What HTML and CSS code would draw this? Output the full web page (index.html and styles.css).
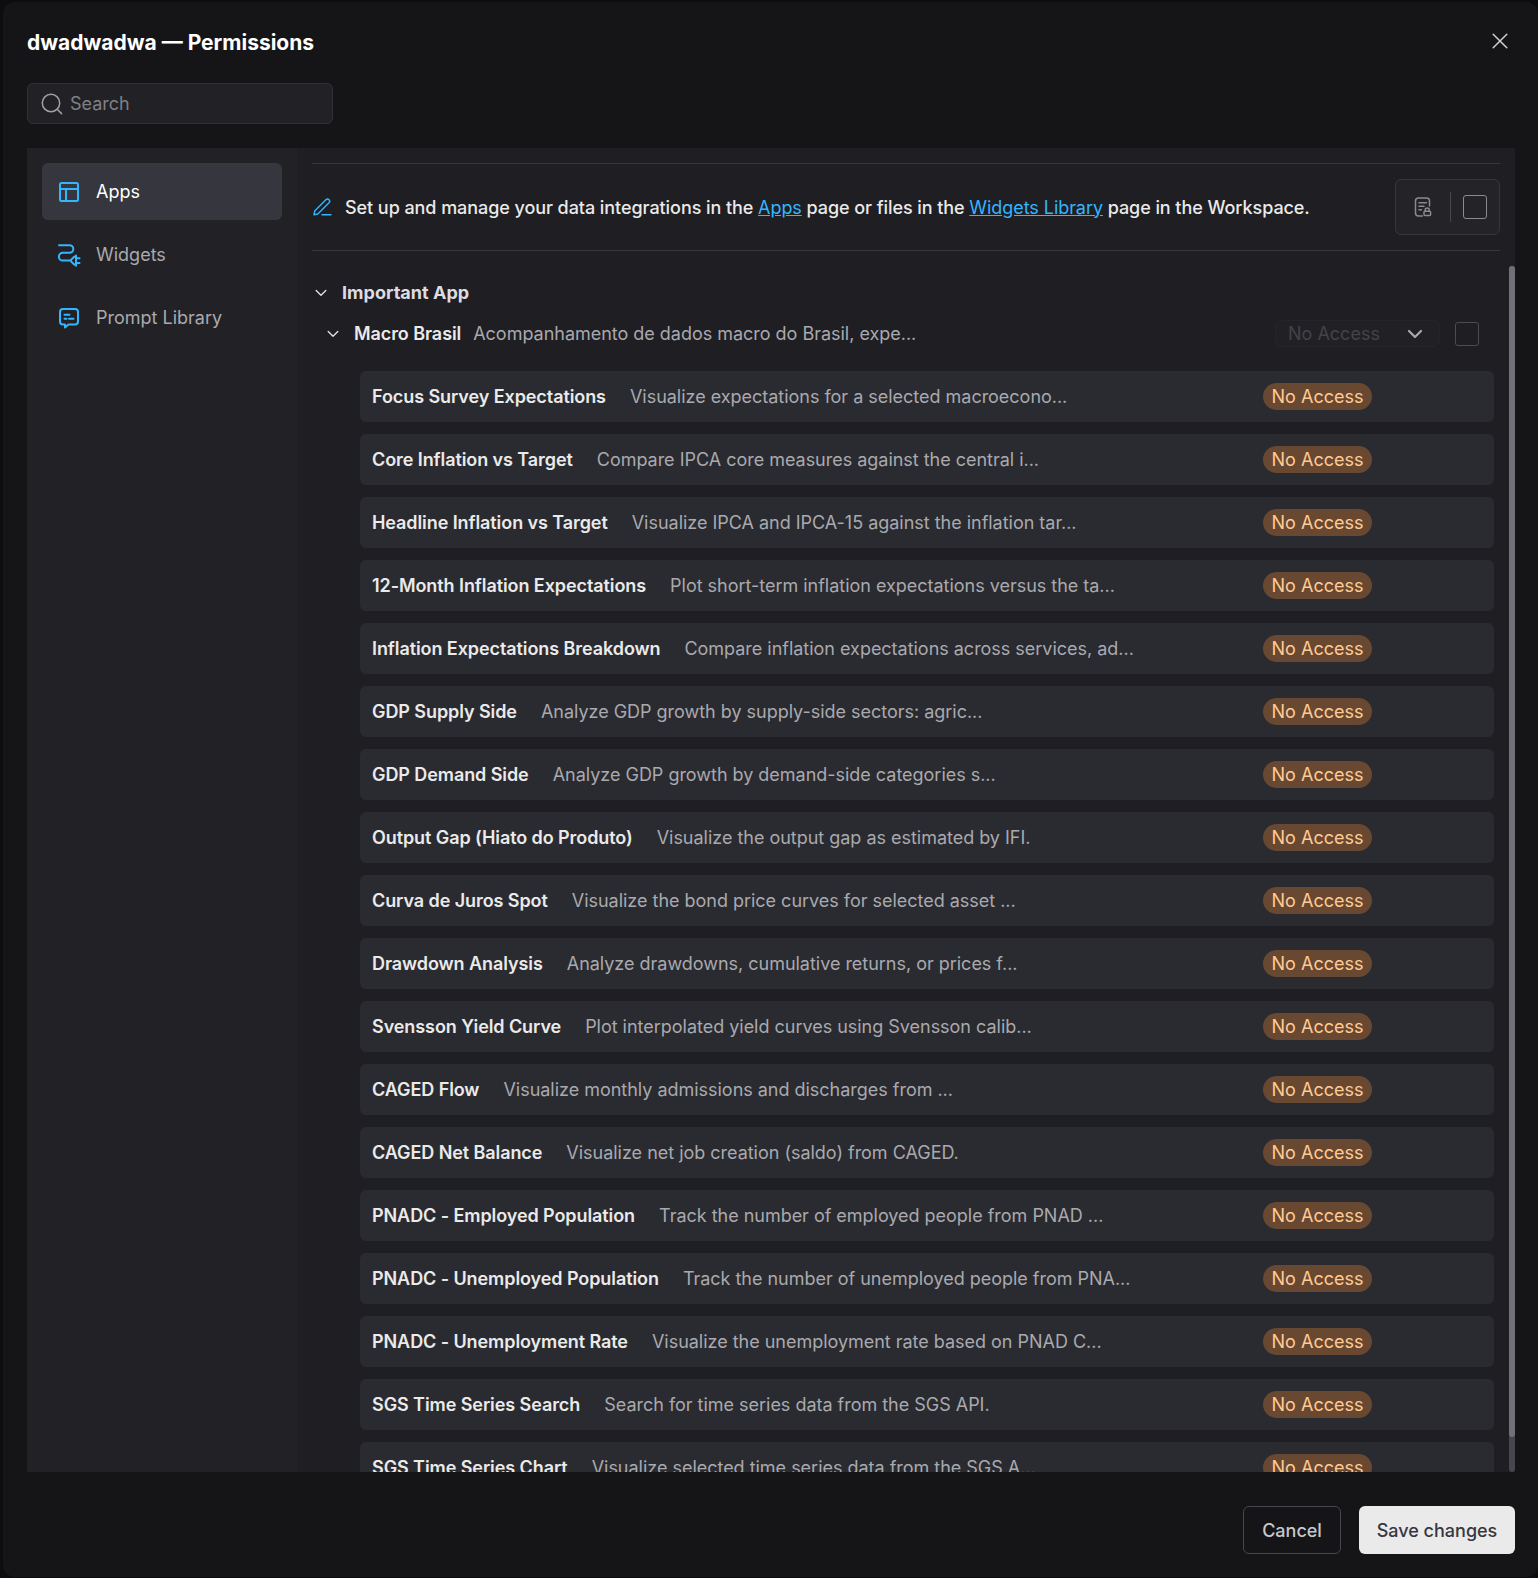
FILE: index.html
```
<!DOCTYPE html>
<html lang="en">
<head>
<meta charset="utf-8">
<title>Permissions</title>
<link rel="stylesheet" href="styles.css">
</head>
<body>
<div class="modal">
  <header class="modal-head">
    <h1>dwadwadwa — Permissions</h1>
    <svg class="close" width="16" height="16" viewBox="0 0 16 16"><path d="M1.2 1.2l13.6 13.6M14.8 1.2L1.2 14.8"/></svg>
  </header>
  <label class="search">
    <svg width="22" height="22" viewBox="0 0 22 22"><circle cx="10" cy="10" r="8.7"/><path d="M16.2 16.2l4.4 4.4"/></svg>
    <span>Search</span>
  </label>
  <div class="panel">
    <nav class="side">
      <a class="nav-item active"><svg width="24" height="24" viewBox="0 0 24 24"><rect x="3" y="3" width="18" height="18" rx="1.5"/><path d="M3 9h18M9 9v12"/></svg>Apps</a>
      <a class="nav-item"><svg width="24" height="24" viewBox="0 0 24 24"><path d="M2 2.200h10.500a3.800 3.800 0 0 1 0 7.600H5.800a3.900 3.900 0 0 0 0 7.800H13.500M19 12.500v10.200M19 13c-2.600.6-3.800 2.600-5.500 4.600 1.700 2 2.900 4 5.500 4.600M19 15.200h3.500M19 20h3.500"/></svg>Widgets</a>
      <a class="nav-item"><svg width="24" height="24" viewBox="0 0 24 24"><path d="M6 3h12a3 3 0 0 1 3 3v9.500a3 3 0 0 1-3 3h-6.500L8 21.500v-3H6a3 3 0 0 1-3-3V6a3 3 0 0 1 3-3zM7.500 8.700h5M7.500 12.700h2M12 12.700h4.500"/></svg>Prompt Library</a>
    </nav>
    <main class="main">
      <div class="notice">
        <svg class="pen" width="20" height="20" viewBox="0 0 20 20"><path d="M2 17.800l.7-3.900L13.900 2.700a2.150 2.150 0 0 1 3.100 3.100L5.800 17zM10 17.800h9"/></svg>
        <p>Set up and manage your data integrations in the <a>Apps</a> page or files in the <a>Widgets Library</a> page in the Workspace.</p>
        <div class="bulk">
          <svg class="doc" width="20" height="22" viewBox="0 0 20 22"><path d="M9.300 20H5.500a3 3 0 0 1-3-3V5a3 3 0 0 1 3-3h8a3 3 0 0 1 3 3v5M6 6.700h7.500M6 10.300h5M6 13.800h2.500M12.200 15.200V14a2 2 0 0 1 4 0v1.200"/><rect x="11" y="15.200" width="6.600" height="4.300" rx="1"/></svg>
          <i class="divider"></i>
          <i class="check bright"></i>
        </div>
      </div>
      <div class="scroller">
        <div class="list">
          <div class="group"><svg class="chev" width="12" height="8" viewBox="0 0 12 8"><path d="M1.200 1.500L6 6.200l4.800-4.700"/></svg><b>Important App</b></div>
          <div class="app">
            <svg class="chev" width="12" height="8" viewBox="0 0 12 8"><path d="M1.200 1.500L6 6.200l4.800-4.700"/></svg>
            <b>Macro Brasil</b><span class="desc">Acompanhamento de dados macro do Brasil, expe...</span>
            <div class="select"><span>No Access</span><svg width="16" height="10" viewBox="0 0 16 10"><path d="M2 2l6 6 6-6"/></svg></div>
            <i class="check"></i>
          </div>
          <div class="rows">
            <div class="row"><b>Focus Survey Expectations</b><span class="desc">Visualize expectations for a selected macroecono...</span><em class="pill">No Access</em></div>
            <div class="row"><b>Core Inflation vs Target</b><span class="desc">Compare IPCA core measures against the central i...</span><em class="pill">No Access</em></div>
            <div class="row"><b>Headline Inflation vs Target</b><span class="desc">Visualize IPCA and IPCA-15 against the inflation tar...</span><em class="pill">No Access</em></div>
            <div class="row"><b>12-Month Inflation Expectations</b><span class="desc">Plot short-term inflation expectations versus the ta...</span><em class="pill">No Access</em></div>
            <div class="row"><b>Inflation Expectations Breakdown</b><span class="desc">Compare inflation expectations across services, ad...</span><em class="pill">No Access</em></div>
            <div class="row"><b>GDP Supply Side</b><span class="desc">Analyze GDP growth by supply-side sectors: agric...</span><em class="pill">No Access</em></div>
            <div class="row"><b>GDP Demand Side</b><span class="desc">Analyze GDP growth by demand-side categories s...</span><em class="pill">No Access</em></div>
            <div class="row"><b>Output Gap (Hiato do Produto)</b><span class="desc">Visualize the output gap as estimated by IFI.</span><em class="pill">No Access</em></div>
            <div class="row"><b>Curva de Juros Spot</b><span class="desc">Visualize the bond price curves for selected asset ...</span><em class="pill">No Access</em></div>
            <div class="row"><b>Drawdown Analysis</b><span class="desc">Analyze drawdowns, cumulative returns, or prices f...</span><em class="pill">No Access</em></div>
            <div class="row"><b>Svensson Yield Curve</b><span class="desc">Plot interpolated yield curves using Svensson calib...</span><em class="pill">No Access</em></div>
            <div class="row"><b>CAGED Flow</b><span class="desc">Visualize monthly admissions and discharges from ...</span><em class="pill">No Access</em></div>
            <div class="row"><b>CAGED Net Balance</b><span class="desc">Visualize net job creation (saldo) from CAGED.</span><em class="pill">No Access</em></div>
            <div class="row"><b>PNADC - Employed Population</b><span class="desc">Track the number of employed people from PNAD ...</span><em class="pill">No Access</em></div>
            <div class="row"><b>PNADC - Unemployed Population</b><span class="desc">Track the number of unemployed people from PNA...</span><em class="pill">No Access</em></div>
            <div class="row"><b>PNADC - Unemployment Rate</b><span class="desc">Visualize the unemployment rate based on PNAD C...</span><em class="pill">No Access</em></div>
            <div class="row"><b>SGS Time Series Search</b><span class="desc">Search for time series data from the SGS API.</span><em class="pill">No Access</em></div>
            <div class="row"><b>SGS Time Series Chart</b><span class="desc">Visualize selected time series data from the SGS A...</span><em class="pill">No Access</em></div>
          </div>
        </div>
        <div class="track"><div class="thumb"></div></div>
      </div>
    </main>
  </div>
  <footer class="actions">
    <button class="btn cancel">Cancel</button>
    <button class="btn save">Save changes</button>
  </footer>
</div>
</body>
</html>
```
FILE: styles.css
```
* { box-sizing: border-box; }
body {
  margin: 0;
  height: 1578px;
  padding: 2px 0 1px 3px;
  overflow: hidden;
  background: #0d0d0f;
  color: #eaeaea;
  font: 400 18px/27px Inter, "Liberation Sans", sans-serif;
}
svg { display: block; flex: none; fill: none; stroke: currentColor; stroke-linecap: round; stroke-linejoin: round; }
i, em { font-style: normal; flex: none; }
b { font-weight: 600; flex: none; letter-spacing: -0.08px; }

.modal {
  height: 1575px;
  padding: 24px 23px 23px 24px;
  display: flex;
  flex-direction: column;
  border-radius: 12px;
  background: #151517;
}
.modal-head { display: flex; justify-content: space-between; height: 57px; }
.modal-head h1 { margin: 0; font-size: 21px; line-height: 33px; font-weight: 700; color: #fff; }
.close { margin: 7px 7px 0 0; color: #d0d0d2; stroke-width: 1.5; }

.search {
  display: flex;
  align-items: center;
  gap: 7px;
  width: 306px;
  height: 41px;
  padding-left: 13px;
  border: 1px solid #303036;
  border-radius: 6px;
  background: #222226;
  color: #808083;
}
.search svg { color: #a0a0a4; stroke-width: 1.5; }

.panel { display: flex; height: 1324px; margin-top: 24px; background: #1f1e23; }
.side { width: 270px; padding: 15px; background: #222226; display: flex; flex-direction: column; gap: 6px; }
.nav-item { display: flex; align-items: center; gap: 15px; height: 57px; padding-left: 15px; border-radius: 6px; color: #a9a9ae; }
.nav-item svg { color: #33b5ff; stroke-width: 2; }
.nav-item.active { background: #36363f; color: #fff; }

.main { flex: 1; padding: 15px 0 0 15px; display: flex; flex-direction: column; min-width: 0; }
.notice { display: flex; align-items: center; height: 88px; margin-right: 15px; border: solid #36363c; border-width: 1px 0; }
.notice p { margin: 0; flex: 1; padding-left: 13px; font-weight: 500; letter-spacing: -0.065px; }
.notice a { color: #33b5ff; font-weight: 400; text-decoration: underline; }
.pen { color: #33b5ff; stroke-width: 1.4; }
.bulk { display: flex; align-items: center; width: 105px; height: 56px; padding-left: 17px; border: 1px solid #36363c; border-radius: 6px; background: #232328; }
.doc { color: #8a8a90; stroke-width: 1.5; }
.divider { width: 1px; height: 30px; margin: 0 12px 0 17px; background: #46464c; }
.check { width: 24px; height: 24px; border: 1px solid #4b4b50; border-radius: 3px; }
.check.bright { border-color: #8a8a90; }

.scroller { display: flex; height: 1206px; margin-top: 15px; overflow: hidden; }
.list { flex: 1; padding: 13px 15px 0 0; }
.group { display: flex; align-items: center; height: 27px; padding-left: 3px; gap: 15px; color: #dcdce2; }
.group b { font-weight: 700; letter-spacing: 0.02px; }
.chev { color: #e0e0e0; stroke-width: 1.4; }
.app { display: flex; align-items: center; height: 27px; margin-top: 14px; padding-left: 15px; padding-right: 15px; }
.app b { margin: 0 12px 0 15px; }
.desc { color: #a9a9ae; white-space: nowrap; letter-spacing: -0.02px; }
.select { display: flex; align-items: center; justify-content: space-between; width: 165px; height: 27px; margin: 0 15px 0 auto; padding: 0 16px 0 12px; border: 1px solid #252529; border-radius: 6px; background: #212125; color: #434348; }
.select svg { color: #a9a9ae; stroke-width: 2.2; }
.rows { display: flex; flex-direction: column; gap: 12px; margin: 24px 0 0 48px; }
.row { display: flex; align-items: center; gap: 24px; height: 51px; padding: 0 122px 0 12px; border-radius: 6px; background: #2a2b30; }
.pill { width: 109px; height: 27px; margin-left: auto; border-radius: 14px; background: #694831; color: #ffcb94; text-align: center; }
.track { width: 6px; border-radius: 3px; background: #46464f; }
.thumb { height: 1171px; border-radius: 3px; background: #707078; }

.actions { display: flex; justify-content: flex-end; gap: 18px; margin-top: 34px; }
.btn { height: 48px; padding: 0; border-radius: 6px; font: 500 18px/27px Inter, "Liberation Sans", sans-serif; }
.cancel { width: 98px; border: 1px solid #46464f; background: transparent; color: #c8c8cb; }
.save { width: 156px; border: 0; background: #eaeaea; color: #36363f; }
```
